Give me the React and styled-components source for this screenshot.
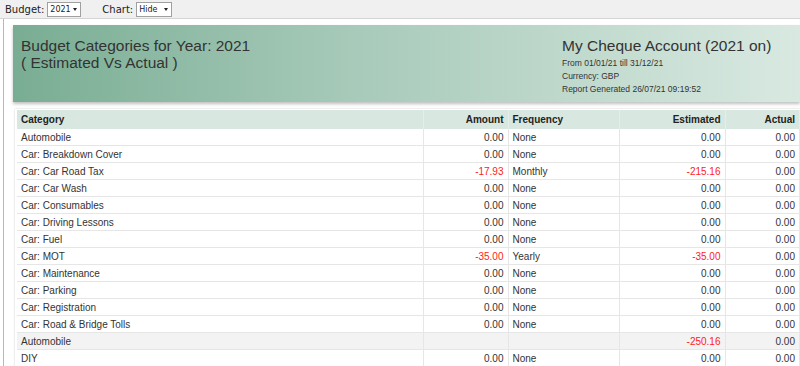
import React from "react";
import styled, { createGlobalStyle } from "styled-components";

const GlobalStyle = createGlobalStyle`
  html, body {
    margin: 0;
    padding: 0;
    background: #ffffff;
    overflow: hidden;
  }
  body {
    font-family: "Liberation Sans", Arial, sans-serif;
    color: #333;
  }
`;

const Toolbar = styled.div`
  height: 18px;
  display: flex;
  align-items: center;
  background: #f0f0f0;
  border-bottom: 1px solid #d4d4d4;
  padding-left: 5px;
  font-family: "DejaVu Sans", Tahoma, sans-serif;
  font-size: 10px;
  color: #222;
`;

const ToolLabel = styled.span`
  margin-right: 3px;
`;

const SelectBox = styled.div`
  width: ${(p) => p.width}px;
  height: 15px;
  box-sizing: border-box;
  border: 1px solid #a0a0a0;
  background: #fff;
  display: flex;
  align-items: center;
  justify-content: space-between;
  padding: 0 3px 0 2px;
  font-size: 8px;
  margin-right: ${(p) => p.gap || 0}px;
`;

const Arrow = styled.span`
  width: 0;
  height: 0;
  border-left: 2.5px solid transparent;
  border-right: 2.5px solid transparent;
  border-top: 3px solid #222;
`;

const Frame = styled.div`
  margin-left: 3px;
  border-left: 1px solid #b8b8b8;
  height: 347px;
  padding: 6px 0 0 9px;
  box-sizing: border-box;
`;

const Banner = styled.div`
  height: 77px;
  display: flex;
  justify-content: space-between;
  background: linear-gradient(to right, #79ad93 0%, #a9cbbb 45%, #d9e9e1 100%);
  box-shadow: 0 2px 3px rgba(0, 0, 0, 0.25);
  padding: 12px 0 0 8px;
  box-sizing: border-box;
`;

const Title = styled.div`
  font-size: 15.5px;
  line-height: 17px;
  color: #333;
`;

const AccountBlock = styled.div`
  width: 238px;
`;

const AccountTitle = styled.div`
  font-size: 15.5px;
  line-height: 18px;
  color: #333;
  margin-bottom: 2px;
`;

const AccountLine = styled.div`
  font-size: 8.5px;
  line-height: 13px;
  color: #333;
`;

const TableWrap = styled.div`
  margin: 7px 0 0 2px;
  padding: 1px 0 0 2px;
  box-shadow: 0 0 2px rgba(0, 0, 0, 0.2);
`;

const Table = styled.table`
  width: 100%;
  border-collapse: collapse;
  font-size: 10px;
  table-layout: fixed;
`;

const HeadCell = styled.th`
  background: #d8e7df;
  height: 19px;
  padding: 0 4px;
  font-weight: bold;
  text-align: ${(p) => (p.right ? "right" : "left")};
  border-right: 1px solid #e6eee9;
  color: #222;
`;

const Row = styled.tr`
  background: ${(p) => (p.total ? "#f3f3f3" : "#fff")};
`;

const Cell = styled.td`
  height: 16px;
  padding: 0 4px;
  border-bottom: 1px solid #e6e6e6;
  border-right: 1px solid #e6e6e6;
  text-align: ${(p) => (p.right ? "right" : "left")};
  color: ${(p) => (p.neg ? "#ff1a1a" : "#333")};
  white-space: nowrap;
  overflow: hidden;
`;

const rows = [
  ["Automobile", "0.00", "None", "0.00", "0.00"],
  ["Car: Breakdown Cover", "0.00", "None", "0.00", "0.00"],
  ["Car: Car Road Tax", "-17.93", "Monthly", "-215.16", "0.00"],
  ["Car: Car Wash", "0.00", "None", "0.00", "0.00"],
  ["Car: Consumables", "0.00", "None", "0.00", "0.00"],
  ["Car: Driving Lessons", "0.00", "None", "0.00", "0.00"],
  ["Car: Fuel", "0.00", "None", "0.00", "0.00"],
  ["Car: MOT", "-35.00", "Yearly", "-35.00", "0.00"],
  ["Car: Maintenance", "0.00", "None", "0.00", "0.00"],
  ["Car: Parking", "0.00", "None", "0.00", "0.00"],
  ["Car: Registration", "0.00", "None", "0.00", "0.00"],
  ["Car: Road & Bridge Tolls", "0.00", "None", "0.00", "0.00"],
  ["Automobile", "", "", "-250.16", "0.00", true],
  ["DIY", "0.00", "None", "0.00", "0.00"],
];

const isNeg = (v) => v.startsWith("-");

export default function App() {
  return (
    <>
      <GlobalStyle />
      <Toolbar>
        <ToolLabel>Budget:</ToolLabel>
        <SelectBox width={34} gap={21}>
          2021 <Arrow />
        </SelectBox>
        <ToolLabel>Chart:</ToolLabel>
        <SelectBox width={36}>
          Hide <Arrow />
        </SelectBox>
      </Toolbar>
      <Frame>
        <Banner>
          <Title>
            Budget Categories for Year: 2021
            <br />( Estimated Vs Actual )
          </Title>
          <AccountBlock>
            <AccountTitle>My Cheque Account (2021 on)</AccountTitle>
            <AccountLine>From 01/01/21 till 31/12/21</AccountLine>
            <AccountLine>Currency: GBP</AccountLine>
            <AccountLine>Report Generated 26/07/21 09:19:52</AccountLine>
          </AccountBlock>
        </Banner>
        <TableWrap>
          <Table>
            <colgroup>
              <col style={{ width: 406 }} />
              <col style={{ width: 85 }} />
              <col style={{ width: 111 }} />
              <col style={{ width: 106 }} />
              <col />
            </colgroup>
            <thead>
              <tr>
                <HeadCell>Category</HeadCell>
                <HeadCell right>Amount</HeadCell>
                <HeadCell>Frequency</HeadCell>
                <HeadCell right>Estimated</HeadCell>
                <HeadCell right>Actual</HeadCell>
              </tr>
            </thead>
            <tbody>
              {rows.map((r, i) => (
                <Row key={i} total={r[5] ? 1 : 0}>
                  <Cell>{r[0]}</Cell>
                  <Cell right neg={isNeg(r[1])}>{r[1]}</Cell>
                  <Cell>{r[2]}</Cell>
                  <Cell right neg={isNeg(r[3])}>{r[3]}</Cell>
                  <Cell right neg={isNeg(r[4])}>{r[4]}</Cell>
                </Row>
              ))}
            </tbody>
          </Table>
        </TableWrap>
      </Frame>
    </>
  );
}
